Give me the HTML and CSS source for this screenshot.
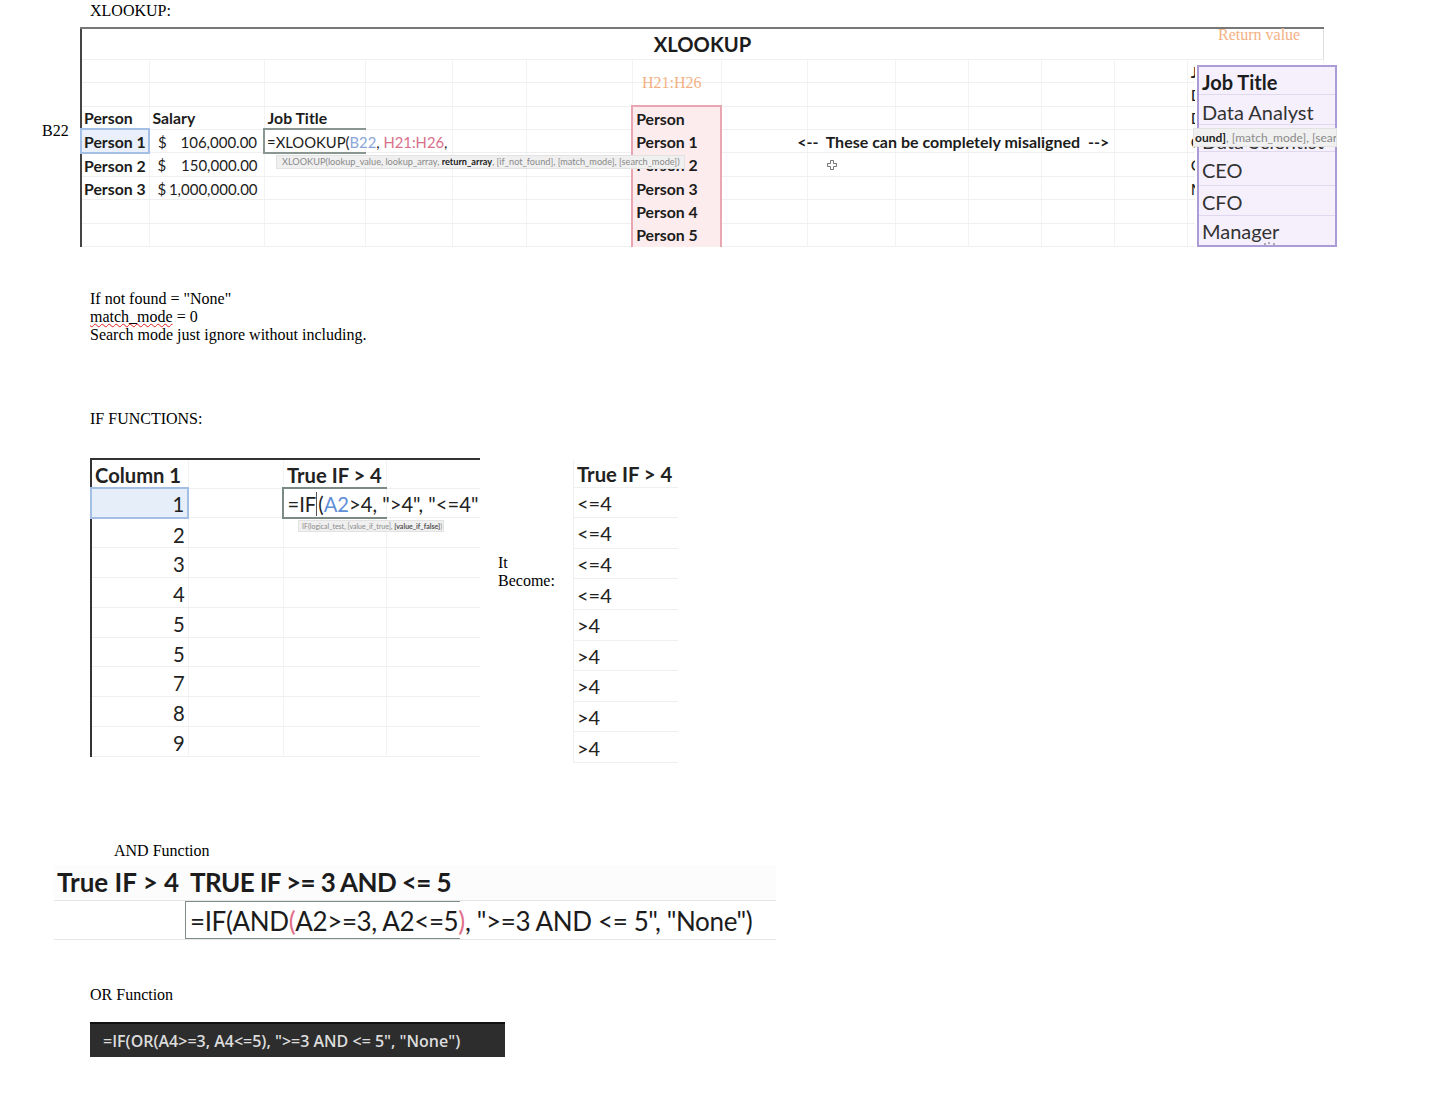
FILE: index.html
```html
<!DOCTYPE html>
<html>
<head>
  <meta charset="UTF-8">
  <title>Excel notes</title>
  <link rel="stylesheet" href="styles.css">
</head>
<body>
  <p class="line">XLOOKUP:</p>

  <!-- XLOOKUP sheet -->
  <div class="xl-wrap">
    <table class="xl">
      <col width="68"><col width="115"><col width="101"><col width="87"><col width="74"><col width="106"><col width="89">
      <col width="86"><col width="88"><col width="73"><col width="73"><col width="73"><col width="73"><col width="136">
      <tr class="title-row"><td colspan="14">XLOOKUP</td></tr>
      <tr><td></td><td></td><td></td><td></td><td></td><td></td><td></td><td></td><td></td><td></td><td></td><td></td><td></td><td class="b">Job Title</td></tr>
      <tr><td></td><td></td><td></td><td></td><td></td><td></td><td></td><td></td><td></td><td></td><td></td><td></td><td></td><td>Data Analyst</td></tr>
      <tr class="b"><td>Person</td><td>Salary</td><td>Job Title</td><td></td><td></td><td></td><td class="pink pink-top">Person</td><td></td><td></td><td></td><td></td><td></td><td></td><td class="reg">Data Scientist</td></tr>
      <tr>
        <td class="b selected">Person 1</td>
        <td><div class="money"><span>$</span><span>106,000.00</span></div></td>
        <td class="formula">=XLOOKUP(<span class="blue">B22</span>, <span class="red">H21:H26</span>,</td>
        <td></td><td></td><td></td>
        <td class="b pink">Person 1</td>
        <td class="b note">&lt;--&nbsp;&nbsp;These can be completely misaligned&nbsp; --&gt;</td>
        <td></td><td></td><td></td><td></td><td></td><td>CEO</td>
      </tr>
      <tr>
        <td class="b">Person 2</td>
        <td><div class="money"><span>$</span><span>150,000.00</span></div></td>
        <td></td><td></td><td></td><td></td>
        <td class="b pink">Person 2</td>
        <td></td><td></td><td></td><td></td><td></td><td></td><td>CFO</td>
      </tr>
      <tr>
        <td class="b">Person 3</td>
        <td><div class="money"><span>$</span><span>1,000,000.00</span></div></td>
        <td></td><td></td><td></td><td></td>
        <td class="b pink">Person 3</td>
        <td></td><td></td><td></td><td></td><td></td><td></td><td>Manager</td>
      </tr>
      <tr><td></td><td></td><td></td><td></td><td></td><td></td><td class="b pink">Person 4</td><td></td><td></td><td></td><td></td><td></td><td></td><td></td></tr>
      <tr><td></td><td></td><td></td><td></td><td></td><td></td><td class="b pink">Person 5</td><td></td><td></td><td></td><td></td><td></td><td></td><td></td></tr>
    </table>

    <span class="tag-b22">B22</span>
    <span class="orange tag-return">Return value</span>
    <span class="orange tag-range">H21:H26</span>

    <div class="hint xl-hint">XLOOKUP(lookup_value, lookup_array, <b>return_array</b>, [if_not_found], [match_mode], [search_mode])</div>

    <svg class="cursor" viewBox="0 0 10 10" width="10" height="10">
      <path d="M3.5 .5h3v3h3v3h-3v3h-3v-3h-3v-3h3z" fill="#fff" stroke="#777"/>
    </svg>

    <!-- purple return column, pasted over the sheet -->
    <div class="jobs">
      <div class="job job-head">Job Title</div>
      <div class="job job-2">Data Analyst</div>
      <div class="job job-3">Data Scientist</div>
      <div class="job job-4">CEO</div>
      <div class="job job-5">CFO</div>
      <div class="job job-6">Manager</div>
      <svg class="cursor-cut" viewBox="0 0 14 4" width="14" height="4">
        <path d="M1 3h2M6 1v2M10 3h2" stroke="#666" fill="none"/>
      </svg>
    </div>
    <div class="hint jobs-hint"><b>ound]</b>, [match_mode], [sear</div>
  </div>

  <div class="notes">
    <p class="line">If not found = "None"</p>
    <p class="line"><span class="squiggle">match_mode</span> = 0</p>
    <p class="line">Search mode just ignore without including.</p>
  </div>

  <p class="line if-title">IF FUNCTIONS:</p>

  <div class="if-row">
    <div class="if-wrap">
      <table class="if-sheet">
        <col width="97"><col width="95"><col width="103"><col width="93">
        <tr class="if-head b"><td>Column 1</td><td></td><td>True IF &gt; 4</td><td></td></tr>
        <tr><td class="num selected">1</td><td></td><td class="formula">=IF<span class="caret">(</span><span class="blue2">A2</span>&gt;4, "&gt;4", "&lt;=4"</td><td></td></tr>
        <tr><td class="num">2</td><td></td><td></td><td></td></tr>
        <tr><td class="num">3</td><td></td><td></td><td></td></tr>
        <tr><td class="num">4</td><td></td><td></td><td></td></tr>
        <tr><td class="num">5</td><td></td><td></td><td></td></tr>
        <tr><td class="num">5</td><td></td><td></td><td></td></tr>
        <tr><td class="num">7</td><td></td><td></td><td></td></tr>
        <tr><td class="num">8</td><td></td><td></td><td></td></tr>
        <tr><td class="num">9</td><td></td><td></td><td></td></tr>
      </table>
      <div class="hint if-hint">IF(logical_test, [value_if_true], <b>[value_if_false]</b>)</div>
    </div>

    <p class="become">It Become:</p>

    <table class="result">
      <tr class="result-head b"><td>True IF &gt; 4</td></tr>
      <tr><td>&lt;=4</td></tr>
      <tr><td>&lt;=4</td></tr>
      <tr><td>&lt;=4</td></tr>
      <tr><td>&lt;=4</td></tr>
      <tr><td>&gt;4</td></tr>
      <tr><td>&gt;4</td></tr>
      <tr><td>&gt;4</td></tr>
      <tr><td>&gt;4</td></tr>
      <tr><td>&gt;4</td></tr>
    </table>
  </div>

  <p class="line and-title">AND Function</p>

  <div class="and-box">
    <div class="and-head">
      <div class="and-first">True IF &gt; 4</div>
      <div class="and-second">TRUE IF &gt;= 3 AND &lt;= 5</div>
    </div>
    <div class="and-body">
      <div class="and-formula">=IF(AND<span class="pinkish">(</span>A2&gt;=3, A2&lt;=5<span class="pinkish">)</span>, "&gt;=3 AND &lt;= 5", "None")</div>
    </div>
  </div>

  <p class="line or-title">OR Function</p>

  <div class="or-bar">=IF(OR(A4&gt;=3, A4&lt;=5), "&gt;=3 AND &lt;= 5", "None")</div>
</body>
</html>
```

FILE: styles.css
```css
body {
  margin: 0;
  padding-top: 2px;
  background: #fff;
  color: #000;
  font-family: "Liberation Serif", serif;
  font-size: 16px;
  line-height: 18px;
}

.line {
  margin: 0 0 0 90px;
}

.b {
  font-weight: 700;
}

/* XLOOKUP sheet */
.xl-wrap {
  position: relative;
  width: 1244px;
  height: 220px;
  margin: 7px 0 0 80px;
}

.xl {
  box-sizing: border-box;
  width: 1244px;
  height: 220px;
  table-layout: fixed;
  border-collapse: collapse;
  border-top: 2px solid #777;
  border-left: 2px solid #444;
  border-bottom: 1px solid #444;
  color: #1c1c1c;
  font-family: Lato, sans-serif;
  font-size: 15.8px;
}

.xl tr {
  height: 23.25px;
}

.xl td {
  padding: 1.5px 0 0 3px;
  border-right: 1px solid #f3f3f3;
  border-bottom: 1px solid #efefef;
  line-height: 16px;
  white-space: nowrap;
}

.xl td:first-child {
  padding-left: 2px;
}

.xl tr:last-child td {
  padding-top: 0;
}

.xl .title-row {
  height: 31px;
}

.xl .title-row td {
  padding: 1px 0 0;
  border-right: 1px solid #ddd;
  font-size: 20.2px;
  font-weight: 700;
  text-align: center;
}

.xl .reg {
  font-weight: 400;
}

.money {
  display: flex;
  justify-content: space-between;
  padding: 0 6px 0 5px;
  font-size: 15px;
}

.xl .selected {
  background: #e9f0fb;
  border: 2px solid #a3bfe6;
}

.xl .formula {
  padding-left: 2px;
  border: 2px solid #8a9690;
  border-right: 1px solid #f3f3f3;
  font-size: 14.8px;
}

.blue {
  color: #8ba6d8;
}

.red {
  color: #d8708a;
}

.xl .pink {
  background: #fdecee;
  border-left: 2px solid #e7a6b2;
  border-right: 2px solid #e7a6b2;
  border-bottom-color: #fdecee;
}

.xl .pink-top {
  border-top: 2px solid #e7a6b2;
}

.xl .note {
  padding-left: 75px;
  border-left: 0;
  font-size: 16px;
}

.orange {
  position: absolute;
  color: #f4b183;
}

.tag-return {
  left: 1138px;
  top: -1px;
}

.tag-range {
  left: 562px;
  top: 47px;
}

.tag-b22 {
  position: absolute;
  left: -38px;
  top: 95px;
}

.hint {
  position: absolute;
  box-sizing: border-box;
  background: #f0f0f0;
  border: 1px solid #e2e2e2;
  color: #8a8a8a;
  font-family: Lato, sans-serif;
  white-space: nowrap;
  overflow: hidden;
}

.hint b {
  color: #222;
}

.xl-hint {
  left: 196px;
  top: 128px;
  width: 409px;
  height: 14px;
  padding-left: 5px;
  font-size: 9.2px;
  line-height: 12px;
}

.cursor {
  position: absolute;
  left: 747px;
  top: 133px;
}

/* purple column */
.jobs {
  position: absolute;
  left: 1117px;
  top: 38px;
  box-sizing: border-box;
  width: 140px;
  height: 182px;
  background: #f6f0fd;
  border: 2px solid #ab9cd8;
  box-shadow: -2px 0 0 #fff;
  color: #333;
  font-family: Lato, sans-serif;
  font-size: 20px;
}

.job {
  box-sizing: border-box;
  padding-left: 3px;
  border-bottom: 1px solid #e0d8ee;
  white-space: nowrap;
}

.job-head {
  height: 28px;
  padding-top: 6px;
  color: #1c1c1c;
  font-weight: 700;
}

.job-2 {
  height: 30px;
  padding-top: 8px;
}

.job-3 {
  height: 27px;
  padding-top: 7px;
}

.job-4 {
  height: 34px;
  padding-top: 9px;
}

.job-5 {
  height: 30px;
  padding-top: 7px;
}

.job-6 {
  height: 29px;
  padding-top: 6px;
  border-bottom: 0;
}

.cursor-cut {
  position: absolute;
  left: 64px;
  bottom: 0;
}

.jobs-hint {
  left: 1113px;
  top: 101px;
  width: 144px;
  height: 19px;
  padding-left: 1px;
  font-size: 12px;
  line-height: 17px;
}

/* notes */
.notes {
  margin-top: 43px;
}

.squiggle {
  text-decoration: underline wavy #e02020 1px;
  text-underline-offset: 1px;
}

.if-title {
  margin-top: 66px;
}

/* IF sheet and the result beside it */
.if-row {
  display: flex;
  align-items: flex-start;
  margin-left: 90px;
  margin-top: 30px;
}

.if-wrap {
  position: relative;
  flex: none;
  width: 390px;
}

.if-sheet {
  box-sizing: border-box;
  width: 390px;
  height: 299px;
  table-layout: fixed;
  border-collapse: collapse;
  border-top: 2px solid #333;
  border-left: 2px solid #333;
  color: #222;
  font-family: Lato, sans-serif;
  font-size: 20.2px;
}

.if-sheet tr {
  height: 29.78px;
}

.if-sheet .if-head {
  height: 29px;
}

.if-sheet td {
  padding: 3px 0 0 3px;
  border-right: 1px solid #f3f3f3;
  border-bottom: 1px solid #efefef;
  line-height: 24px;
  white-space: nowrap;
}

.if-sheet td:last-child {
  border-right: 0;
}

.if-sheet .num {
  padding-right: 3px;
  text-align: right;
}

.if-sheet .selected {
  background: #e6eef9;
  border: 2px solid #a3bfe6;
}

.if-sheet .formula {
  border: 2px solid #7c8a85;
  border-right: 1px solid #f3f3f3;
}

.blue2 {
  color: #5f8fd8;
}

.caret {
  border-left: 1px solid #555;
  padding-left: 1px;
}

.if-hint {
  left: 208px;
  top: 62px;
  width: 146px;
  height: 12px;
  padding-left: 3px;
  font-size: 7px;
  line-height: 10px;
}

.if-hint b {
  color: #555;
}

.become {
  flex: none;
  width: 60px;
  margin: 96px 15px 0 18px;
}

.result {
  box-sizing: border-box;
  width: 105px;
  height: 303px;
  margin-top: 2px;
  border-collapse: collapse;
  border-left: 1px solid #f0f0f0;
  color: #222;
  font-family: Lato, sans-serif;
  font-size: 20px;
}

.result tr {
  height: 30.6px;
}

.result .result-head {
  height: 27px;
  font-size: 20.3px;
}

.result td {
  padding: 1px 0 0 3px;
  border-bottom: 1px solid #efefef;
  line-height: 24px;
}

/* AND */
.and-title {
  margin: 79px 0 0 114px;
}

.and-box {
  width: 722px;
  margin: 5px 0 0 54px;
  color: #1c1c1c;
  font-family: Lato, sans-serif;
  font-size: 26px;
  line-height: 34px;
  white-space: nowrap;
}

.and-head {
  display: flex;
  box-sizing: border-box;
  height: 36px;
  border-bottom: 1px solid #e6e6e6;
  background: #fcfcfc;
  font-weight: 700;
}

.and-first {
  width: 131px;
  padding-left: 3px;
  box-sizing: border-box;
}

.and-second {
  padding-left: 5px;
  letter-spacing: -.6px;
}

.and-body {
  box-sizing: border-box;
  height: 39px;
  padding-left: 131px;
  border-bottom: 1px solid #e6e6e6;
}

.and-formula {
  box-sizing: border-box;
  width: 275px;
  height: 38px;
  padding: 2px 0 0 4px;
  border: 1px solid #7d8f88;
  border-right: 0;
  letter-spacing: -.37px;
}

.pinkish {
  color: #e0708a;
}

.or-title {
  margin-top: 46px;
}

.or-bar {
  box-sizing: border-box;
  width: 415px;
  height: 35px;
  margin: 18px 0 0 90px;
  padding-left: 13px;
  background: #2d2d2d;
  border-top: 2px solid #111;
  color: #dcdcdc;
  font-family: "Open Sans", sans-serif;
  font-size: 16px;
  font-weight: 600;
  line-height: 35px;
}
```
